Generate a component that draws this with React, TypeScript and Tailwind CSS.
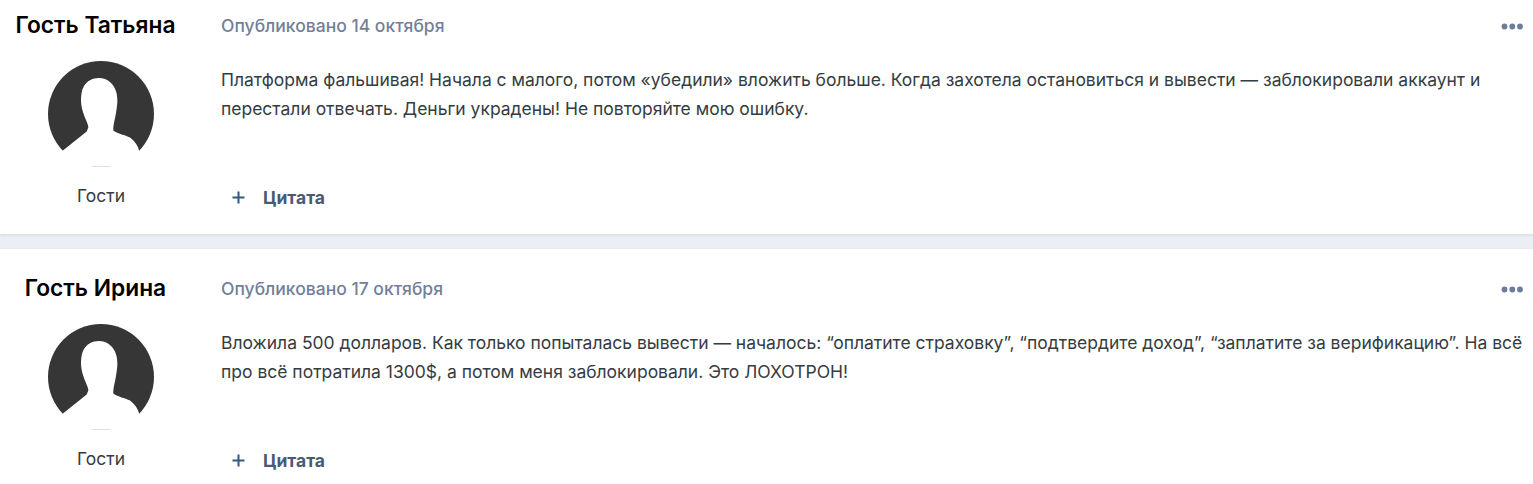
const font = { fontFamily: "Inter, 'Noto Sans', sans-serif" };

function Avatar() {
  return (
    <svg width="106" height="106" viewBox="48 61 106 106" className="block">
      <circle cx="101" cy="114" r="53" fill="#363636" />
      <path
        d="M99 78 C92 78 87 81 84 86 C81.500 90 81 96 81 100 C81 108 84 115 86 120 C87 123 88.500 125 88.300 127.500 L86.700 131.500 L62.300 151 L139.300 151 C138 146 135 141 130 137.500 C125 135 118 134 113.300 130.500 C113 126 115 119 116 113 C117 107 117.500 103 117.300 99 C117 92 115 87 111 83 C107 79 103 78 99 78 Z"
        fill="#ffffff"
      />
      <rect x="48" y="151" width="106" height="15.500" fill="#ffffff" />
      <path d="M91.500 166.800 Q101 166.200 110.500 166.800" stroke="#e4e4e4" strokeWidth="1" fill="none" />
    </svg>
  );
}

function Dots() {
  return (
    <svg width="23" height="7" viewBox="0 0 23 7" className="block" aria-hidden="true">
      <circle cx="3.500" cy="3.500" r="2.900" fill="#6d7c9a" />
      <circle cx="11.300" cy="3.500" r="2.900" fill="#6d7c9a" />
      <circle cx="19" cy="3.500" r="2.900" fill="#6d7c9a" />
    </svg>
  );
}

function Post({ name, date, lines, height, top }: { name: string; date: string; lines: string[]; height: string; top: string }) {
  return (
    <article className={`flex bg-white shadow-[0_1px_3px_rgba(0,0,0,0.1)] ${height} ${top}`}>
      <aside className="flex w-[221px] shrink-0 flex-col">
        <h3 className="mt-[10px] w-[191px] text-center text-[22.75px] leading-[30px] font-semibold text-black">{name}</h3>
        <div className="mt-[21px] ml-[48px]">
          <Avatar />
        </div>
        <div className="mt-[17px] w-[202px] text-center text-[17.5px] leading-[24px] text-[#353c41]">Гости</div>
      </aside>
      <div className="flex min-w-0 flex-1 flex-col pr-[9px]">
        <div className="mt-[14px] flex h-[24px] items-center justify-between">
          <span className="text-[17.5px] leading-[24px] font-medium text-[#737f9a]">{date}</span>
          <Dots />
        </div>
        <div className="mt-[27px] text-[17.49px] leading-[29px] text-[#353c41]">
          {lines.map((l) => (
            <p key={l} className="whitespace-nowrap">{l}</p>
          ))}
        </div>
        <div className="mt-[61px] flex items-center pl-[11px]">
          <svg width="13" height="13" viewBox="0 0 13 13" aria-hidden="true" className="block">
            <path d="M6.500 0.500V12.500M0.500 6.500H12.500" stroke="#33597f" strokeWidth="2" />
          </svg>
          <span className="mt-[2px] ml-[18px] text-[17.5px] leading-[24px] font-bold text-[#4a5a75]">Цитата</span>
        </div>
      </div>
    </article>
  );
}

export default function App() {
  return (
    <div className="flex h-[484px] flex-col gap-[15px] overflow-hidden bg-[#ebeff5]" style={font}>
      <Post
        height="h-[234px]"
        top=""
        name="Гость Татьяна"
        date="Опубликовано 14 октября"
        lines={[
          "Платформа фальшивая! Начала с малого, потом «убедили» вложить больше. Когда захотела остановиться и вывести — заблокировали аккаунт и",
          "перестали отвечать. Деньги украдены! Не повторяйте мою ошибку.",
        ]}
      />
      <Post
        height="h-[235px]"
        top="pt-[14px]"
        name="Гость Ирина"
        date="Опубликовано 17 октября"
        lines={[
          "Вложила 500 долларов. Как только попыталась вывести — началось: “оплатите страховку”, “подтвердите доход”, “заплатите за верификацию”. На всё",
          "про всё потратила 1300$, а потом меня заблокировали. Это ЛОХОТРОН!",
        ]}
      />
    </div>
  );
}
